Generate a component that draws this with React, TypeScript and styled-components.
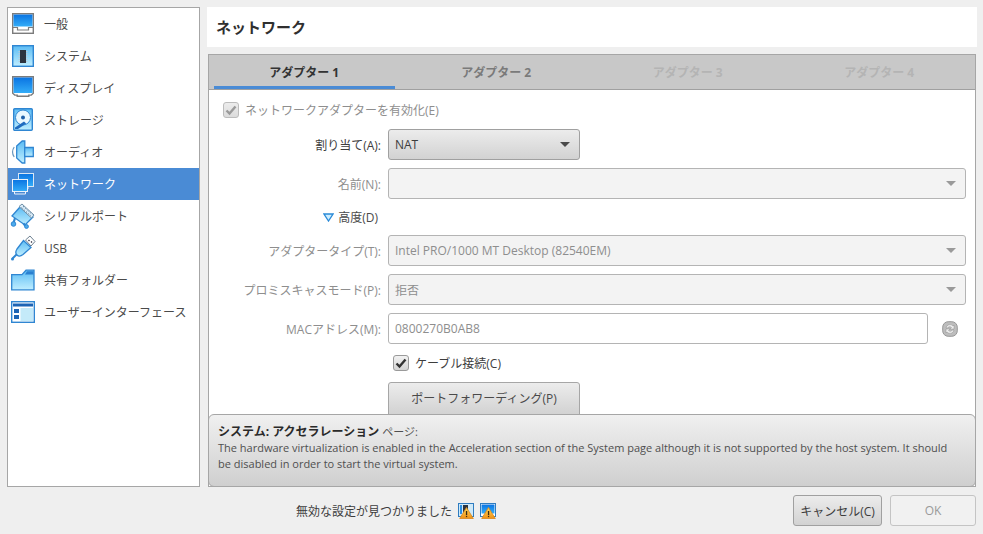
import styled, { createGlobalStyle } from 'styled-components';

const GlobalStyle = createGlobalStyle`
  html, body {
    margin: 0;
    padding: 0;
    background: #efefef;
  }
  body {
    font-family: "Open Sans", "Noto Sans CJK JP", sans-serif;
    font-size: 12px;
    color: #3d3d3d;
  }
`;

const Shared = () => (
  <svg width="0" height="0" style={{ position: 'absolute' }}>
    <defs>
      <linearGradient id="deep" x1="0" y1="0" x2="0" y2="1">
        <stop offset="0" stopColor="#0a74e2" />
        <stop offset="1" stopColor="#34adf8" />
      </linearGradient>
      <linearGradient id="light" x1="0" y1="0" x2="0" y2="1">
        <stop offset="0" stopColor="#5cbcf4" />
        <stop offset="1" stopColor="#bfeeff" />
      </linearGradient>
      <linearGradient id="warn" x1="0" y1="0" x2="0" y2="1">
        <stop offset="0" stopColor="#ffd85a" />
        <stop offset="1" stopColor="#f09014" />
      </linearGradient>
    </defs>
  </svg>
);

const GeneralIcon = () => (
  <svg width="24" height="24" viewBox="0 0 24 24">
    <rect x="1.700" y="1.700" width="20.600" height="19.600" fill="#fff" stroke="#7c7c7c" strokeWidth="1.400" />
    <rect x="2.500" y="2.500" width="19" height="12" fill="url(#deep)" />
    <path d="M2 15.500h4.500v2.500h11v-2.500H22" fill="none" stroke="#7c7c7c" strokeWidth="1.200" />
  </svg>
);

const SystemIcon = () => (
  <svg width="24" height="24" viewBox="0 0 24 24">
    <rect x="1.700" y="1.700" width="20.600" height="20.600" fill="url(#light)" stroke="#2f86d2" strokeWidth="1.400" />
    <path d="M7.500 7.500h9M7.500 9.500h9M7.500 11.500h9M7.500 13.500h9M7.500 15.500h9M7.500 17.500h9" stroke="#b8c8d4" strokeWidth="1" />
    <rect x="9" y="6" width="6" height="13" fill="#2c3440" />
  </svg>
);

const DisplayIcon = () => (
  <svg width="24" height="24" viewBox="0 0 24 24">
    <path d="M1.700 0.700h20.600v16.600l-2 1.800h-2.500v1.200H6.200v-1.200H3.700l-2-1.800z" fill="#fff" stroke="#7c7c7c" strokeWidth="1.400" />
    <rect x="2.500" y="1.500" width="19" height="15.500" fill="url(#deep)" />
  </svg>
);

const StorageIcon = () => (
  <svg width="24" height="24" viewBox="0 0 24 24">
    <rect x="2.700" y="0.700" width="18.600" height="21.600" rx="1" fill="url(#light)" stroke="#2f86d2" strokeWidth="1.400" />
    <circle cx="12" cy="9.500" r="7.500" fill="#eaf8ff" stroke="#2f86d2" />
    <circle cx="12" cy="9.500" r="2" fill="#1f5fa8" />
    <path d="M4 19.500l9-6 2.200 2-8.200 5.500H4z" fill="#1f6cc0" />
  </svg>
);

const AudioIcon = () => (
  <svg width="24" height="24" viewBox="0 0 24 24">
    <path d="M3.200 7a9 9 0 0 0 0 10" fill="none" stroke="#6a98be" strokeWidth="1.200" />
    <path d="M5.700 6l5.500-5h2.600v22h-2.600l-5.500-5z" fill="url(#light)" stroke="#2f86d2" strokeWidth="1.300" />
    <path d="M13.700 7.500h8.600v9h-8.600z" fill="url(#light)" stroke="#2f86d2" strokeWidth="1.300" />
  </svg>
);

const NetworkIcon = () => (
  <svg width="24" height="24" viewBox="0 0 24 24">
    <rect x="7.500" y="1.500" width="15" height="13" fill="url(#deep)" stroke="#d8e6f4" />
    <path d="M17 14.500v2.500h-1.500" fill="none" stroke="#d8e6f4" />
    <rect x="1.500" y="7.500" width="15" height="12" fill="url(#deep)" stroke="#eaf2fb" />
    <path d="M3.500 19.500v2.500h11v-2.500" fill="none" stroke="#eaf2fb" />
  </svg>
);

const SerialIcon = () => (
  <svg width="26" height="26" viewBox="0 0 26 26">
    <path d="M2 13l8-9 13 10-8 8z" fill="url(#light)" stroke="#2f86d2" strokeWidth="1.300" />
    <path d="M9 3.500L12 1l12 11-2.500 3z" fill="#d8ebf8" stroke="#6f90a8" />
    <path d="M11.500 4.500l9.500 8.500M13 3.200l9.300 8.300" stroke="#6a889f" strokeDasharray="1.500 1.500" fill="none" />
    <path d="M5 15l-1.500 5M13.500 20.500l2 2.500" stroke="#2f86d2" strokeWidth="2.200" />
    <circle cx="3.500" cy="21" r="2.300" fill="#4cabec" stroke="#2f86d2" />
    <circle cx="16.500" cy="23.500" r="1.900" fill="#4cabec" stroke="#2f86d2" />
  </svg>
);

const UsbIcon = () => (
  <svg width="26" height="26" viewBox="0 0 26 26">
    <path d="M15.500 5L20 1l5 5.500-4 4.500z" fill="#fff" stroke="#6c7f90" />
    <path d="M18.500 5l1 1M21 6.500l1 1" stroke="#334" strokeWidth="1.300" />
    <path d="M13.500 5.500l7.500 7-8 7c-3 2.500-5 1.500-6 .5s-2-3 0-6z" fill="url(#light)" stroke="#2f86d2" strokeWidth="1.300" />
    <path d="M6.500 19.500l-4 4" stroke="#2f86d2" strokeWidth="2" />
    <circle cx="2.500" cy="24" r="1.500" fill="#2f86d2" />
  </svg>
);

const FolderIcon = () => (
  <svg width="24" height="22" viewBox="0 0 24 22">
    <path d="M.7 5.700L11 5.700 15 1.200h8v19.600H.7z" fill="url(#light)" stroke="#2f86d2" strokeWidth="1.300" />
    <path d="M14 5.500l2-3.300h6.500v3.300z" fill="#2a80d0" />
  </svg>
);

const InterfaceIcon = () => (
  <svg width="24" height="22" viewBox="0 0 24 22">
    <rect x="0.700" y="0.700" width="22.600" height="20.600" fill="#fff" stroke="#2f86d2" strokeWidth="1.400" />
    <rect x="2" y="2.500" width="20" height="3" fill="#1d64b4" />
    <rect x="3" y="8" width="5" height="4" fill="#1d64b4" />
    <rect x="3" y="14" width="5" height="4" fill="#1d64b4" />
    <rect x="9.500" y="7" width="12.500" height="13" fill="#c4eaf9" />
  </svg>
);

const WarnMonitor = ({ dark }: { dark?: boolean }) => (
  <svg width="16" height="16" viewBox="0 0 16 16">
    <rect x="0.500" y="0.500" width="15" height="13" fill={dark ? '#cfe9f8' : '#fff'} stroke="#2f7cc0" />
    {dark && <rect x="5" y="2" width="5" height="9" fill="#2b3440" />}
    {dark && <rect x="2" y="2" width="2" height="9" fill="#2d8fe2" />}
    {!dark && <rect x="1.500" y="1.500" width="13" height="9" fill="url(#deep)" />}
    <path d="M8.500 4.500l6.800 11H1.700z" fill="url(#warn)" stroke="#d8861a" strokeWidth="0.800" />
    <rect x="7.900" y="8" width="1.300" height="4" fill="#3a2a10" />
    <rect x="7.900" y="12.800" width="1.300" height="1.300" fill="#3a2a10" />
  </svg>
);

const Check = ({ color }: { color: string }) => (
  <svg width="12" height="12" viewBox="0 0 12 12">
    <path d="M1.500 6.500L4.500 9.500 10.500 2.500" fill="none" stroke={color} strokeWidth="2.400" />
  </svg>
);

const Arrow = ({ color }: { color: string }) => (
  <svg width="10" height="5" viewBox="0 0 10 5">
    <path d="M0 0h10L5 5z" fill={color} />
  </svg>
);

const Root = styled.div`
  width: 983px;
  height: 534px;
  box-sizing: border-box;
  padding: 7px 6px 8px 7px;
  display: grid;
  grid-template-columns: 193px 1fr;
  grid-template-rows: 1fr 39px;
  column-gap: 7px;
  overflow: hidden;
`;

const Sidebar = styled.nav`
  box-sizing: border-box;
  height: 480px;
  background: #fff;
  border: 1px solid #a6a6a6;
  display: flex;
  flex-direction: column;
`;

const NavRow = styled.div<{ $active?: boolean }>`
  height: 32px;
  flex: none;
  display: flex;
  align-items: center;
  background: ${(p) => (p.$active ? '#4a8bd5' : 'transparent')};
  color: ${(p) => (p.$active ? '#fff' : '#4a4a4a')};
`;

const NavIcon = styled.span`
  width: 30px;
  margin-right: 6px;
  flex: none;
  display: flex;
  justify-content: center;
  & svg { display: block; flex: none; }
`;

const Main = styled.div`
  display: flex;
  flex-direction: column;
  gap: 7px;
  height: 480px;
`;

const PageTitle = styled.h1`
  margin: 0;
  height: 40px;
  flex: none;
  box-sizing: border-box;
  background: #fff;
  padding: 0 0 2px 9px;
  display: flex;
  align-items: center;
  font-size: 15px;
  font-weight: 700;
  color: #2f2f2f;
`;

const Panel = styled.section`
  margin: 0 1px;
  flex: 1;
  min-height: 0;
  box-sizing: border-box;
  background: #fff;
  border: 1px solid #a6a6a6;
  display: flex;
  flex-direction: column;
  position: relative;
`;

const Tabs = styled.div`
  height: 35px;
  flex: none;
  box-sizing: border-box;
  background: #c8c8c8;
  border-bottom: 1px solid #a0a0a0;
  display: grid;
  grid-template-columns: repeat(4, 1fr);
`;

const Tab = styled.div<{ $state: 'active' | 'idle' | 'off' }>`
  display: flex;
  align-items: center;
  justify-content: center;
  font-weight: 700;
  margin: 0 ${(p) => (p.$state === 'active' ? '6px 0 5px' : '0')};
  padding-top: 2px;
  color: ${(p) => (p.$state === 'active' ? '#333' : p.$state === 'idle' ? '#7a7a7a' : '#b4b4b4')};
  border-bottom: 3px solid ${(p) => (p.$state === 'active' ? '#4a8bd5' : 'transparent')};
  box-sizing: border-box;
`;

const Form = styled.div`
  flex: 1;
  min-height: 0;
  display: grid;
  grid-template-columns: 179px 1fr 47px;
  grid-auto-rows: min-content;
  align-items: center;
  padding-top: 10px;
`;

const Label = styled.div<{ $on?: boolean; $gap?: number }>`
  grid-column: 1;
  justify-self: end;
  padding-right: 7px;
  height: 31px;
  margin-bottom: ${(p) => p.$gap ?? 8}px;
  display: flex;
  align-items: center;
  color: ${(p) => (p.$on ? '#3d3d3d' : '#8e8e8e')};
`;

const CheckRow = styled.label<{ $on?: boolean; $full?: boolean; $gap: number }>`
  grid-column: ${(p) => (p.$full ? '1 / -1' : '2 / -1')};
  height: 20px;
  margin-bottom: ${(p) => p.$gap}px;
  padding-left: ${(p) => (p.$full ? '14px' : '5px')};
  display: flex;
  align-items: center;
  gap: 6px;
  color: ${(p) => (p.$on ? '#3d3d3d' : '#8e8e8e')};
`;

const Box = styled.span<{ $on?: boolean }>`
  width: 16px;
  height: 16px;
  box-sizing: border-box;
  border-radius: 3px;
  border: 1px solid ${(p) => (p.$on ? '#9a9a9a' : '#bcbcbc')};
  background: ${(p) => (p.$on ? 'linear-gradient(#f2f2f2, #d4d4d4)' : 'linear-gradient(#ececec, #dcdcdc)')};
  display: flex;
  align-items: center;
  justify-content: center;
`;

const Combo = styled.div<{ $on?: boolean; $span?: boolean }>`
  grid-column: ${(p) => (p.$span ? '2 / -1' : '2')};
  ${(p) => (p.$span ? 'margin-right: 9px;' : 'width: 192px;')}
  height: 31px;
  margin-bottom: 8px;
  box-sizing: border-box;
  padding: 0 9px 0 6px;
  border-radius: 3px;
  border: 1px solid ${(p) => (p.$on ? '#a0a0a0' : '#b4b4b4')};
  background: ${(p) => (p.$on ? 'linear-gradient(#ececec, #d2d2d2)' : '#f3f3f3')};
  color: ${(p) => (p.$on ? '#3d3d3d' : '#8e8e8e')};
  display: flex;
  align-items: center;
  justify-content: space-between;
`;

const Advanced = styled.div`
  grid-column: 1;
  justify-self: end;
  padding-right: 10px;
  height: 20px;
  margin-bottom: 8px;
  display: flex;
  align-items: center;
  gap: 4px;
  color: #4a4a4a;
`;

const Spacer = styled.div`
  grid-column: 2 / -1;
`;

const Field = styled.div`
  grid-column: 2;
  height: 31px;
  margin-bottom: 9px;
  box-sizing: border-box;
  padding-left: 6px;
  background: #fff;
  border-radius: 3px;
  border: 1px solid #b4b4b4;
  color: #8e8e8e;
  display: flex;
  align-items: center;
`;

const Refresh = styled.span`
  grid-column: 3;
  margin: 0 4px 9px 0;
  justify-self: center;
  display: flex;
`;

const PushButton = styled.div`
  grid-column: 2;
  width: 192px;
  height: 33px;
  box-sizing: border-box;
  padding-bottom: 2px;
  border-radius: 3px 3px 0 0;
  border: 1px solid #a6a6a6;
  background: linear-gradient(#ececec, #d2d2d2);
  color: #4a4a4a;
  display: flex;
  align-items: center;
  justify-content: center;
`;

const Warning = styled.div`
  margin: -1px -1px -1px;
  height: 73px;
  flex: none;
  box-sizing: border-box;
  border: 1px solid #a6a6a6;
  border-radius: 6px;
  background: linear-gradient(#f0f0f0, #cfcfcf);
  padding: 9px 9px 0;
  font-size: 11px;
  line-height: 16px;
  color: #4f4f4f;
  position: relative;
  & strong { font-size: 12px; color: #2a2a2a; }
`;

const Footer = styled.footer`
  grid-column: 1 / -1;
  display: grid;
  grid-template-columns: 1fr 89px 86px;
  column-gap: 8px;
  padding-top: 8px;
  padding-right: 1px;
  box-sizing: border-box;
`;

const Notice = styled.div`
  padding-left: 289px;
  display: flex;
  align-items: center;
  gap: 6px;
  color: #3d3d3d;
  & svg { display: block; }
`;

const FooterButton = styled.div<{ $off?: boolean }>`
  height: 31px;
  box-sizing: border-box;
  border-radius: 3px;
  border: 1px solid ${(p) => (p.$off ? '#c4c4c4' : '#a0a0a0')};
  background: ${(p) => (p.$off ? '#f1f1f1' : 'linear-gradient(#ececec, #d2d2d2)')};
  color: ${(p) => (p.$off ? '#9a9a9a' : '#3d3d3d')};
  display: flex;
  align-items: center;
  justify-content: center;
`;

const NAV_ITEMS = [
  { label: '一般', icon: <GeneralIcon /> },
  { label: 'システム', icon: <SystemIcon /> },
  { label: 'ディスプレイ', icon: <DisplayIcon /> },
  { label: 'ストレージ', icon: <StorageIcon /> },
  { label: 'オーディオ', icon: <AudioIcon /> },
  { label: 'ネットワーク', icon: <NetworkIcon />, active: true },
  { label: 'シリアルポート', icon: <SerialIcon /> },
  { label: 'USB', icon: <UsbIcon /> },
  { label: '共有フォルダー', icon: <FolderIcon /> },
  { label: 'ユーザーインターフェース', icon: <InterfaceIcon /> },
];

function App() {
  return (
    <>
      <GlobalStyle />
      <Shared />
      <Root>
        <Sidebar>
          {NAV_ITEMS.map((item) => (
            <NavRow key={item.label} $active={item.active}>
              <NavIcon>{item.icon}</NavIcon>
              {item.label}
            </NavRow>
          ))}
        </Sidebar>
        <Main>
          <PageTitle>ネットワーク</PageTitle>
          <Panel>
            <Tabs>
              <Tab $state="active">アダプター 1</Tab>
              <Tab $state="idle">アダプター 2</Tab>
              <Tab $state="off">アダプター 3</Tab>
              <Tab $state="off">アダプター 4</Tab>
            </Tabs>
            <Form>
              <CheckRow $full $gap={9}>
                <Box><Check color="#9a9a9a" /></Box>
                ネットワークアダプターを有効化(E)
              </CheckRow>
              <Label $on>割り当て(A):</Label>
              <Combo $on>
                NAT
                <Arrow color="#4a4a4a" />
              </Combo>
              <Label>名前(N):</Label>
              <Combo $span>
                <span />
                <Arrow color="#9a9a9a" />
              </Combo>
              <Advanced>
                <svg width="11" height="9" viewBox="0 0 11 9">
                  <path d="M1 1h9L5.500 8z" fill="#cdeeff" stroke="#2a8ad8" strokeWidth="1.300" />
                </svg>
                高度(D)
              </Advanced>
              <Spacer />
              <Label>アダプタータイプ(T):</Label>
              <Combo $span>
                Intel PRO/1000 MT Desktop (82540EM)
                <Arrow color="#9a9a9a" />
              </Combo>
              <Label>プロミスキャスモード(P):</Label>
              <Combo $span>
                拒否
                <Arrow color="#9a9a9a" />
              </Combo>
              <Label $gap={9}>MACアドレス(M):</Label>
              <Field>0800270B0AB8</Field>
              <Refresh>
                <svg width="16" height="16" viewBox="0 0 16 16">
                  <rect x="0.700" y="0.700" width="14.600" height="14.600" rx="5.500" fill="#bdbdbd" stroke="#989898" />
                  <path d="M4 7a4 4 0 0 1 7-2l1-1v4H8l1.500-1.500A2.500 2.500 0 0 0 5.500 7zM12 9a4 4 0 0 1-7 2l-1 1V8h4L6.500 9.500A2.500 2.500 0 0 0 10.500 9z" fill="#efefef" stroke="#8e8e8e" strokeWidth="0.500" />
                </svg>
              </Refresh>
              <CheckRow $on $gap={9}>
                <Box $on><Check color="#333" /></Box>
                ケーブル接続(C)
              </CheckRow>
              <PushButton>ポートフォワーディング(P)</PushButton>
            </Form>
            <Warning>
              <strong>システム: アクセラレーション</strong> ページ:
              <br />
              The hardware virtualization is enabled in the Acceleration section of the System page although it is not supported by the host system. It should
              <br />
              be disabled in order to start the virtual system.
            </Warning>
          </Panel>
        </Main>
        <Footer>
          <Notice>
            無効な設定が見つかりました
            <WarnMonitor dark />
            <WarnMonitor />
          </Notice>
          <FooterButton>キャンセル(C)</FooterButton>
          <FooterButton $off>OK</FooterButton>
        </Footer>
      </Root>
    </>
  );
}

export default App;
